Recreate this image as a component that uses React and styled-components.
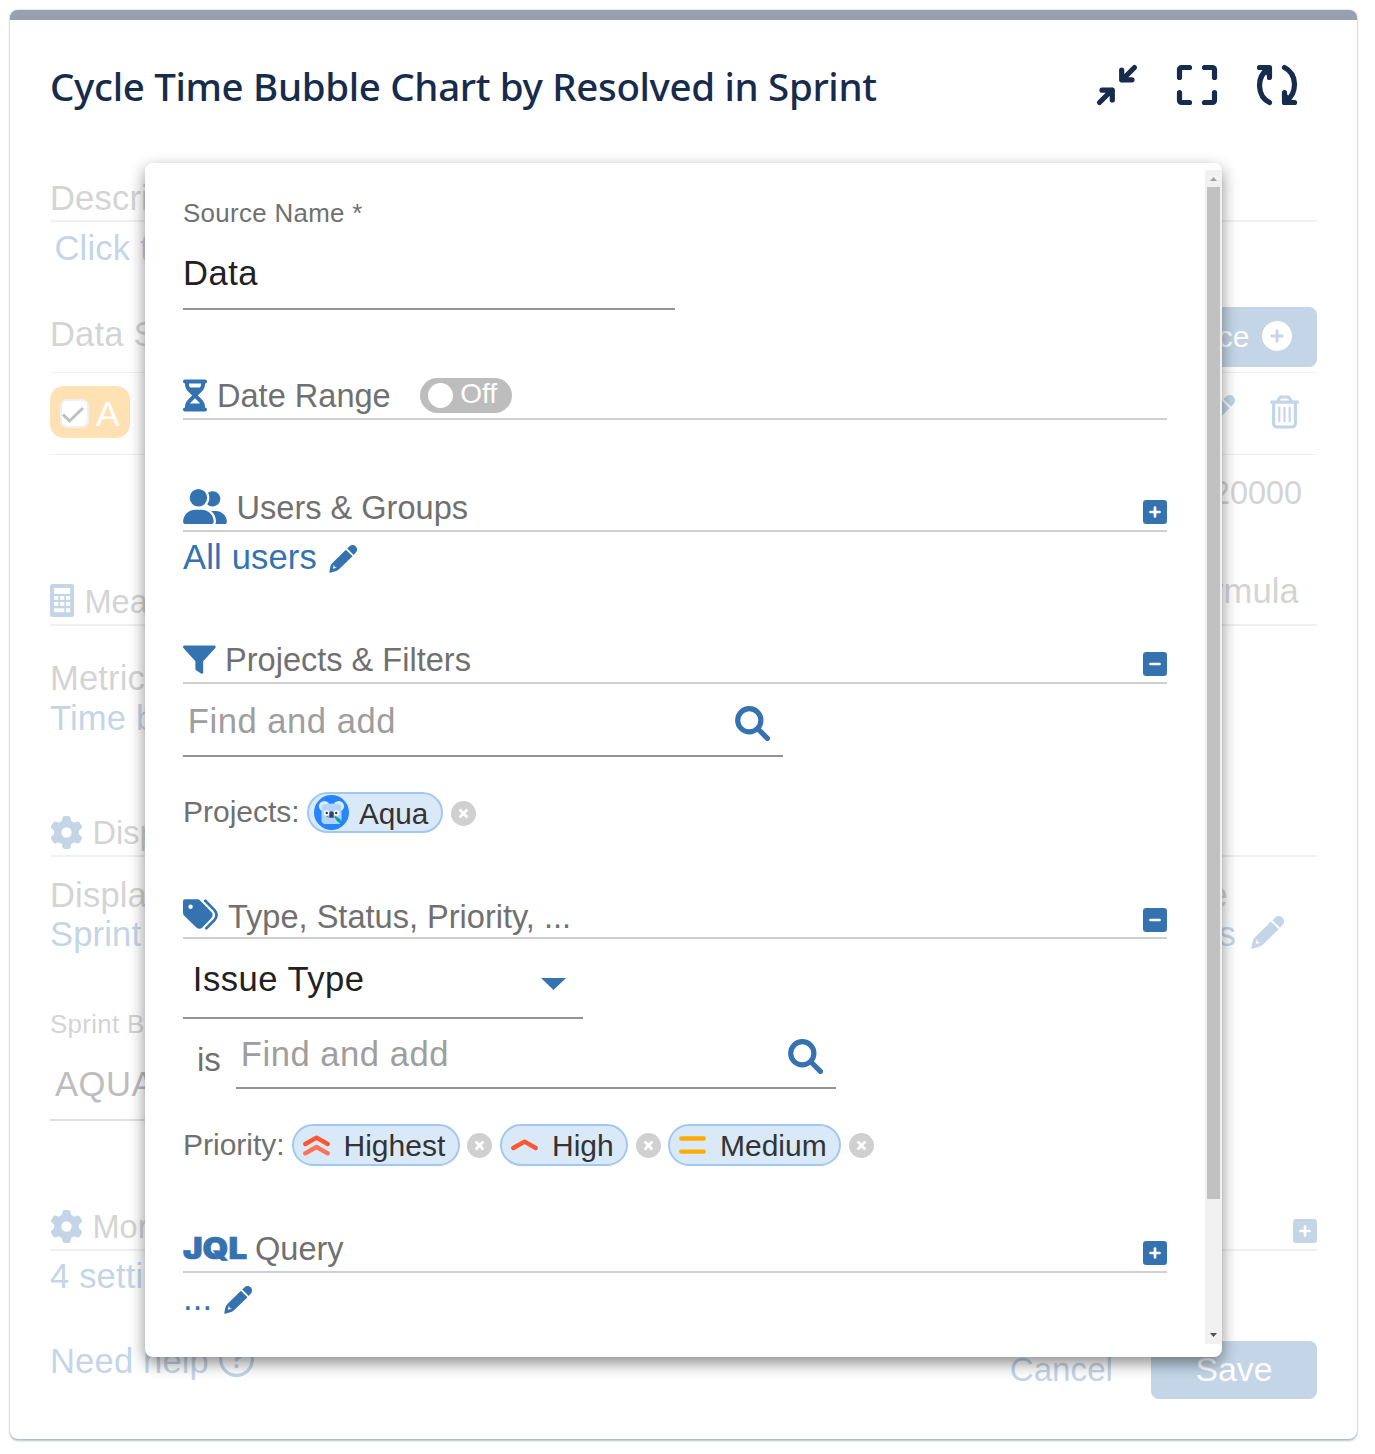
import React from 'react';
import styled, { createGlobalStyle } from 'styled-components';
import {
  FaRegTrashCan,
  FaGear,
  FaCirclePlus,
  FaRegCircleQuestion,
} from 'react-icons/fa6';

const BLUE = '#3572b0';
const GREY = '#707070';

const GlobalStyle = createGlobalStyle`
  * { box-sizing: border-box; }
  body {
    margin: 0;
    background: #fff;
    font-family: "Liberation Sans", Arial, sans-serif;
    color: ${GREY};
  }
`;

const Page = styled.main`
  position: relative;
  width: 1375px;
  height: 1454px;
  padding: 10px 18px 15px 10px;
  overflow: hidden;
`;

const Card = styled.section`
  height: 1429px;
  border-top: 10px solid #97a0af;
  border-radius: 8px;
  background: #fff;
  padding: 45px 40px 40px;
  box-shadow: 0 2px 2px rgba(9, 30, 66, 0.25), 0 0 2px rgba(9, 30, 66, 0.31);
`;

const TitleBar = styled.header`
  display: flex;
  justify-content: space-between;
  height: 40px;
  padding-right: 20px;
`;

const Title = styled.h1`
  margin: 1px 0 0;
  font: 500 38.5px/40px "Noto Sans", "Open Sans", sans-serif;
  letter-spacing: -0.34px;
  color: #172b4d;
  white-space: nowrap;
`;

const Tools = styled.div`
  display: flex;
  gap: 40px;
`;

const ToolIcon = styled.svg`
  width: 40px;
  height: 40px;
  overflow: visible;
  fill: none;
  stroke: #172b4d;
  stroke-width: 5.2;
  stroke-linecap: round;
  stroke-linejoin: round;
`;

const Form = styled.div`
  display: flex;
  flex-direction: column;
  opacity: 0.295;
  padding-top: 70px;
`;

const Icon = styled.span`
  flex: none;
  color: ${(p) => p.$color || BLUE};
  margin-top: ${(p) => p.$top || 0}px;
  margin-left: ${(p) => p.$left || 0}px;
  svg {
    display: block;
    width: ${(p) => p.$w}px;
    height: ${(p) => p.$h || p.$w}px;
  }
`;

const Text = styled.div`
  font-size: 34.6px;
  letter-spacing: 0.15px;
  line-height: ${(p) => p.$line || 40}px;
  margin-top: ${(p) => p.$top || 0}px;
  margin-right: ${(p) => p.$end || 0}px;
  padding-left: ${(p) => p.$indent || 0}px;
  color: ${(p) => (p.$link ? BLUE : GREY)};
  white-space: nowrap;
`;

const Split = styled.div`
  display: flex;
  justify-content: space-between;
  align-items: flex-start;
  height: ${(p) => p.$h}px;
  margin-top: ${(p) => p.$top || 0}px;
  padding-right: ${(p) => p.$end || 0}px;
  border-bottom: ${(p) => p.$rule || 0}px solid #cfcfcf;
`;

const Cluster = styled.div`
  display: flex;
  align-items: flex-start;
`;

const ConditionRow = styled.div`
  display: flex;
  align-items: flex-start;
  height: 70px;
`;

const SectionHead = styled.div`
  display: flex;
  align-items: flex-start;
  height: 44px;
  margin-top: ${(p) => p.$top}px;
  border-bottom: 2px solid #cfcfcf;
`;

const SectionTitle = styled.h2`
  margin: 0 auto 0 ${(p) => p.$gap}px;
  font-size: 32.55px;
  font-weight: 400;
  line-height: ${(p) => p.$line || 41}px;
  color: ${GREY};
  white-space: nowrap;
`;

const ToggleTitle = styled(SectionTitle)`
  margin-right: 0;
`;

const JqlMark = styled.span`
  width: 64px;
  font: 900 29.5px/38px Inter, "Liberation Sans", sans-serif;
  color: ${BLUE};
  -webkit-text-stroke: 0.7px ${BLUE};
  transform: scaleX(1.115);
  transform-origin: 0 50%;
`;

const Label = styled.label`
  display: block;
  margin-top: ${(p) => p.$top || 0}px;
  font-size: 25.9px;
  letter-spacing: 0.32px;
  line-height: 30px;
`;

const Field = styled.div`
  display: flex;
  justify-content: space-between;
  width: ${(p) => p.$w}px;
  height: ${(p) => p.$h}px;
  margin-top: ${(p) => p.$top || 0}px;
  padding-left: ${(p) => p.$indent || 0}px;
  padding-right: ${(p) => p.$end || 0}px;
  border-bottom: 2px solid #949494;
  font-size: 34.6px;
  letter-spacing: 0.52px;
  line-height: ${(p) => p.$line}px;
  color: ${(p) => (p.$empty ? '#9e9e9e' : '#212121')};
  white-space: nowrap;
`;

const SourceButton = styled.button`
  display: flex;
  align-items: flex-start;
  height: 60px;
  border: 0;
  border-radius: 8px;
  padding: 0 25px;
  background: ${BLUE};
  color: #fff;
  font: 30px/59px "Liberation Sans", Arial, sans-serif;
`;

const SourceBadge = styled.div`
  display: flex;
  align-items: flex-start;
  width: 80px;
  height: 52px;
  margin-top: 13px;
  padding-left: 10px;
  border-radius: 14px;
  background: #ff9b00;
  color: #fff;
  font-size: 35.4px;
  line-height: 56px;
`;

const Check = styled.svg`
  width: 29px;
  height: 29px;
  margin: 13px 7px 0 0;
  border: 2px solid #cccdd4;
  border-radius: 7px;
  background: #fff;
  fill: none;
  stroke: #2d2d2d;
  stroke-width: 3;
`;

const Limit = styled.div`
  padding-right: 15px;
  font-size: 32.4px;
  line-height: 76px;
  height: 76px;
  text-align: right;
`;

const Footer = styled.footer`
  display: flex;
  align-items: flex-start;
  height: 58px;
  margin-top: 40px;
`;

const CancelButton = styled.button`
  margin-left: auto;
  margin-right: 38px;
  padding: 0;
  border: 0;
  background: none;
  color: ${BLUE};
  font: 33.2px/57px "Liberation Sans", Arial, sans-serif;
`;

const SaveButton = styled.button`
  width: 166px;
  height: 58px;
  padding: 0 0 2px;
  border: 0;
  border-radius: 8px;
  background: ${BLUE};
  color: #fff;
  font: 33.8px/56px "Liberation Sans", Arial, sans-serif;
`;

const Dialog = styled.section`
  position: absolute;
  left: 145px;
  top: 163px;
  width: 1077px;
  height: 1194px;
  display: flex;
  justify-content: space-between;
  padding-left: 38px;
  border-radius: 8px;
  background: #fff;
  box-shadow: 0 6px 16px rgba(0, 0, 0, 0.46);
`;

const DialogBody = styled.div`
  width: 984px;
  padding-top: 35px;
`;

const Scrollbar = styled.div`
  display: flex;
  flex-direction: column;
  justify-content: space-between;
  align-items: center;
  width: 17px;
  height: 1174px;
  margin-top: 7px;
  padding: 7px 0;
  background: #f1f1f1;
`;

const Thumb = styled.div`
  width: 13px;
  height: 1012px;
  margin: 6px 0 auto;
  background: #c1c1c1;
`;

const Arrow = styled.svg`
  display: block;
  width: 7px;
  height: 4px;
  fill: ${(p) => p.$fill};
`;

const Caret = styled.svg`
  width: 25px;
  height: 12px;
  margin-top: 39px;
  fill: ${BLUE};
`;

const Toggle = styled.div`
  display: flex;
  align-items: flex-start;
  width: 92px;
  height: 35px;
  margin: 2px auto 0 29.5px;
  padding-left: 8px;
  border-radius: 18px;
  background: #bdbdbd;
  color: #fff;
  font-size: 28px;
  line-height: 31px;
`;

const Knob = styled.span`
  width: 25px;
  height: 25px;
  margin: 5px 7px 0 0;
  border-radius: 50%;
  background: #fff;
`;

const Operator = styled.span`
  width: 53px;
  padding-left: 14px;
  font-size: 33px;
  line-height: 81px;
`;

const ChipRow = styled.div`
  display: flex;
  align-items: flex-start;
  height: ${(p) => p.$h}px;
  margin-top: ${(p) => p.$top}px;
`;

const ChipLabel = styled.span`
  width: ${(p) => p.$w}px;
  font-size: 30px;
  line-height: ${(p) => p.$line}px;
  white-space: nowrap;
`;

const Chip = styled.span`
  display: flex;
  align-items: flex-start;
  width: ${(p) => p.$w}px;
  height: ${(p) => p.$h}px;
  padding-left: ${(p) => p.$pad}px;
  border: 2px solid #a0c8f2;
  border-radius: 21px;
  background: #dae9f8;
  color: #333;
  font-size: ${(p) => p.$size || 30}px;
  line-height: 39px;
`;

const ChipIcon = styled.svg`
  flex: none;
  width: ${(p) => p.$w}px;
  height: ${(p) => p.$h}px;
  margin: ${(p) => p.$top}px ${(p) => p.$gap}px 0 0;
  fill: none;
  stroke-width: 4.4;
  stroke-linecap: round;
  stroke-linejoin: round;
`;

const RemoveMark = styled.svg`
  width: 25px;
  height: 25px;
  margin: 9px ${(p) => 15 - p.$gap}px 0 ${(p) => p.$gap}px;
  fill: #d0d0d0;
  stroke: #fff;
  stroke-width: 2.8;
`;

function Remove({ gap = 8 }) {
  return (
    <RemoveMark viewBox="0 0 25 25" $gap={gap}>
      <circle cx="12.5" cy="12.5" r="12.5" stroke="none" />
      <path d="M8.6 8.6l7.8 7.8M16.4 8.6l-7.8 7.8" />
    </RemoveMark>
  );
}

function Pencil() {
  return (
    <svg viewBox="0 0 28 28" fill="currentColor" fillRule="evenodd">
      <path d="M18.2 3.500L20.600 1.300a4.200 4.200 0 0 1 6 0l.2.200a4.200 4.200 0 0 1 0 6L24.700 9.900z" />
      <path d="M16.900 4.700L23.500 11.300 10.300 24Q8 26 5.500 26.500L1.200 27.700Q.2 27.900.3 26.900L1.300 22Q2 19.300 3.900 17.500zM3.900 23.700L8 22.700 5.700 22 4.900 19.600z" />
    </svg>
  );
}

function Search() {
  return (
    <svg viewBox="0 0 35 35" fill="none" stroke="currentColor" strokeWidth="5.2" strokeLinecap="round">
      <circle cx="14.300" cy="14.300" r="11.600" />
      <path d="M23.500 23.500l8.900 8.900" />
    </svg>
  );
}

function Hourglass() {
  return (
    <svg viewBox="0 0 384 512" fill="currentColor">
      <path d="M32 0C14.300 0 0 14.300 0 32S14.300 64 32 64V75c0 42.400 16.900 83.100 46.900 113.100L146.700 256 78.900 323.900C48.900 353.900 32 394.600 32 437v11c-17.700 0-32 14.300-32 32s14.300 32 32 32H352c17.700 0 32-14.300 32-32s-14.300-32-32-32V437c0-42.400-16.900-83.100-46.900-113.100L237.300 256l67.900-67.900c30-30 46.900-70.700 46.900-113.100V64c17.700 0 32-14.300 32-32s-14.300-32-32-32H32zM96 75V64H288V75c0 19-5.600 37.400-16 53H112c-10.300-15.600-16-34-16-53zm16 309c3.500-5.300 7.600-10.300 12.100-14.900L192 301.300l67.900 67.900c4.600 4.600 8.600 9.600 12.100 14.900H112z" />
    </svg>
  );
}

function UserPair() {
  return (
    <svg viewBox="0 0 640 512" fill="currentColor">
      <path d="M96 128a128 128 0 1 1 256 0A128 128 0 1 1 96 128zM0 482.300C0 383.800 79.800 304 178.300 304h91.400C368.200 304 448 383.800 448 482.300c0 16.400-13.300 29.700-29.700 29.700H29.700C13.300 512 0 498.700 0 482.300zM609.300 512H471.400c5.400-9.400 8.600-20.300 8.600-32v-8c0-60.700-27.100-115.200-69.800-151.800c2.400-.1 4.700-.2 7.100-.2h61.400C567.800 320 640 392.200 640 481.300c0 17-13.800 30.700-30.700 30.700zM432 256c-31 0-59-12.600-79.300-32.900C372.400 196.500 384 163.600 384 128c0-26.800-6.600-52.100-18.300-74.300C384.300 40.100 407.200 32 432 32c61.900 0 112 50.100 112 112s-50.100 112-112 112z" />
    </svg>
  );
}

function Funnel() {
  return (
    <svg viewBox="0 0 33 29" fill="currentColor">
      <path d="M1.600.4h29.600a1.500 1.500 0 0 1 1.100 2.500L20.200 16.200v11.300a1.300 1.300 0 0 1-2.100 1l-5.100-3.300a1.500 1.500 0 0 1-.6-1.200v-7.800L.4 2.900A1.500 1.500 0 0 1 1.600.4z" />
    </svg>
  );
}

function Tags() {
  return (
    <svg viewBox="0 0 35 31" fill="currentColor" fillRule="evenodd">
      <path d="M2 .3h12.500a3.500 3.500 0 0 1 2.400 1L28.400 13a4.200 4.200 0 0 1 0 6L19.400 28.600a4.200 4.200 0 0 1-6 0L1 16.400a3.400 3.400 0 0 1-1-2.400V2.300a2 2 0 0 1 2-2zM7.600 5.600a2.200 2.200 0 1 0 0 4.400 2.200 2.200 0 0 0 0-4.400z" />
      <path d="M22.300 1.700l9.200 9.400q4.100 4.900 0 9.900l-8.200 8.300" fill="none" stroke="currentColor" strokeWidth="2.700" strokeLinecap="round" />
    </svg>
  );
}

function Calculator() {
  return (
    <svg viewBox="0 0 24 33" fill="currentColor" fillRule="evenodd">
      <path d="M2.500 0h19A2.500 2.500 0 0 1 24 2.500v28a2.500 2.500 0 0 1-2.500 2.500h-19A2.500 2.500 0 0 1 0 30.500v-28A2.500 2.500 0 0 1 2.500 0zM4 4v6h16.200V4zM4 12v3.700h4.300V12zm6 0v3.700h4.300V12zm6 0v3.700h4.200V12zM4 18v3.700h4.300V18zm6 0v3.700h4.300V18zm6 0v3.700h4.200V18zM4 24.200v4h10.300v-4zm12 0v4h4.200v-4z" />
    </svg>
  );
}

function Koala() {
  return (
    <ChipIcon viewBox="0 0 35 35" $w={35} $h={35} $top={1} $gap={10}>
      <g stroke="none">
        <circle cx="17.5" cy="17.5" r="17.5" fill="#2684ff" />
        <circle cx="10.3" cy="11.3" r="5.4" fill="#deebff" />
        <circle cx="24.700" cy="11.3" r="5.4" fill="#deebff" />
        <circle cx="11" cy="12" r="3" fill="#b3d4ff" />
        <circle cx="24" cy="12" r="3" fill="#b3d4ff" />
        <path d="M7.5 17c0-5.500 4-8.500 10-8.500s10 3 10 8.500v8.500c0 2-1.500 3.500-3.500 3.500H11c-2 0-3.500-1.500-3.500-3.500z" fill="#b3d4ff" />
        <circle cx="12.5" cy="18" r="2.800" fill="#fff" />
        <circle cx="22.500" cy="18" r="2.800" fill="#fff" />
        <circle cx="12.800" cy="18" r="1.300" fill="#344563" />
        <circle cx="22.200" cy="18" r="1.300" fill="#344563" />
        <path d="M15.300 18.200c0-1.200 1-1.900 2.200-1.900s2.200.7 2.200 1.900v4h-4.400z" fill="#344563" />
        <path d="M12 20.800c2.500 1.700 8.500 1.700 11 0-1 2.600-10 2.600-11 0z" fill="#344563" />
        <path d="M21.500 22.500c3 0 5 1.500 6.500 5.500-3.500-.5-5.500-2-6.500-5.500z" fill="#00a3a3" stroke="#00a3a3" strokeWidth="1" />
      </g>
    </ChipIcon>
  );
}

function ExpandToggle({ open, top = 11.5 }) {
  return (
    <Icon $w={24} $top={top}>
      <svg viewBox="0 0 24 24">
        <rect width="24" height="24" rx="3.200" fill="currentColor" />
        <path
          d={open ? 'M7.500 12h9' : 'M7.500 12h9M12 7.500v9'}
          stroke="#fff"
          strokeWidth="2.700"
          strokeLinecap="round"
        />
      </svg>
    </Icon>
  );
}

function Header() {
  return (
    <TitleBar>
      <Title>Cycle Time Bubble Chart by Resolved in Sprint</Title>
      <Tools>
        <ToolIcon viewBox="0 0 40 40">
          <path d="M37.500 2.500L25 15M24.700 5v9.800H35M2.500 37.500L15 25M15.300 35v-9.800H5" />
        </ToolIcon>
        <ToolIcon viewBox="0 0 40 40">
          <path d="M2.500 12.500v-8a2 2 0 0 1 2-2h8M27.500 2.500h8a2 2 0 0 1 2 2v8M37.500 27.500v8a2 2 0 0 1-2 2h-8M12.500 37.500h-8a2 2 0 0 1-2-2v-8" />
        </ToolIcon>
        <ToolIcon viewBox="0 0 40 40">
          <path d="M2.500 2.500h10v10M12.500 37.500C-.3 31-.5 12 10.500 4.500M37.500 37.500h-10v-10M27.500 2.500C40.300 9 40.500 28 29.500 35.500" />
          <path d="M8 4.500h4v4.500zM32 35.500h-4V31z" />
        </ToolIcon>
      </Tools>
    </TitleBar>
  );
}

function BackgroundForm() {
  return (
    <Form>
      <Split $h={47} $rule={2}>
        <Text $line={46}>Description</Text>
      </Split>
      <Text $line={52} $link $indent={4.5}>Click to</Text>

      <Split $top={33} $h={66} $rule={1}>
        <Text $line={54}>Data Source</Text>
        <SourceButton>
          Source
          <Icon $color="#fff" $w={30} $top={14} $left={12.5}><FaCirclePlus /></Icon>
        </SourceButton>
      </Split>
      <Split $h={82} $rule={1} $end={18}>
        <SourceBadge>
          <Check viewBox="0 0 25 25"><path d="M1 13.500l6.500 6.500L21 7" /></Check>
          A
        </SourceBadge>
        <Cluster>
          <Icon $w={33} $top={22}><Pencil /></Icon>
          <Icon $w={29} $h={34} $top={22} $left={35}><FaRegTrashCan /></Icon>
        </Cluster>
      </Split>
      <Limit>20000</Limit>

      <SectionHead $top={51}>
        <Icon $w={24} $h={33} $top={2}><Calculator /></Icon>
        <SectionTitle $gap={10.5}>Measure</SectionTitle>
        <Text $line={38} $top={-10} $end={18}>Formula</Text>
      </SectionHead>
      <Text $top={32}>Metric</Text>
      <Text $link>Time by</Text>

      <SectionHead $top={75}>
        <Icon $w={33} $top={3}><FaGear /></Icon>
        <SectionTitle $gap={9.5}>Display</SectionTitle>
      </SectionHead>
      <Split $top={18} $h={40} $end={89}>
        <Text>Display</Text>
        <Text>Value</Text>
      </Split>
      <Split $h={38} $end={33}>
        <Text $line={38} $link>Sprint</Text>
        <Cluster>
          <Text $line={38} $link>Issues</Text>
          <Icon $w={33} $top={1} $left={15}><Pencil /></Icon>
        </Cluster>
      </Split>

      <Label $top={56}>Sprint Board</Label>
      <Field $top={20} $w={400} $h={62} $line={50} $indent={5}>AQUA board</Field>

      <SectionHead $top={86}>
        <Icon $w={33} $top={3}><FaGear /></Icon>
        <SectionTitle $gap={9.5}>More</SectionTitle>
        <ExpandToggle />
      </SectionHead>
      <Text $line={50} $link>4 settings</Text>

      <Footer>
        <Text $link>Need help</Text>
        <Icon $w={35} $top={1} $left={9.5}><FaRegCircleQuestion /></Icon>
        <CancelButton>Cancel</CancelButton>
        <SaveButton>Save</SaveButton>
      </Footer>
    </Form>
  );
}

function PriorityChips() {
  return (
    <ChipRow $top={35} $h={42}>
      <ChipLabel $w={109} $line={41}>Priority:</ChipLabel>
      <Chip $w={168} $h={42} $pad={9}>
        <ChipIcon viewBox="0 0 27 21" $w={27} $h={21} $top={9} $gap={13.5}>
          <path d="M2.300 9l11.200-6.300L24.700 9" stroke="#ff5630" />
          <path d="M2.300 18.300l11.200-6.300 11.200 6.300" stroke="#ff7452" />
        </ChipIcon>
        Highest
      </Chip>
      <Remove gap={7} />
      <Chip $w={128} $h={42} $pad={9}>
        <ChipIcon viewBox="0 0 27 12" $w={27} $h={12} $top={13} $gap={14}>
          <path d="M2.300 9l11.200-6.300L24.700 9" stroke="#ff5630" />
        </ChipIcon>
        High
      </Chip>
      <Remove />
      <Chip $w={173} $h={42} $pad={9}>
        <ChipIcon viewBox="0 0 27 18" $w={27} $h={18} $top={10} $gap={14}>
          <path d="M2.300 2.500h22.400M2.300 15.600h22.400" stroke="#ffab00" />
        </ChipIcon>
        Medium
      </Chip>
      <Remove />
    </ChipRow>
  );
}

function SourceDialog() {
  return (
    <Dialog>
      <DialogBody>
        <Label>Source Name *</Label>
        <Field $top={20} $w={492} $h={62} $line={50}>Data</Field>

        <SectionHead $top={66}>
          <Icon $w={24} $h={33} $top={3}><Hourglass /></Icon>
          <ToggleTitle $gap={10}>Date Range</ToggleTitle>
          <Toggle><Knob />Off</Toggle>
        </SectionHead>

        <SectionHead $top={68}>
          <Icon $w={44} $h={35} $top={1}><UserPair /></Icon>
          <SectionTitle $gap={9.5}>Users &amp; Groups</SectionTitle>
          <ExpandToggle />
        </SectionHead>
        <Cluster>
          <Text $line={50} $link>All users</Text>
          <Icon $w={28} $top={13} $left={12}><Pencil /></Icon>
        </Cluster>

        <SectionHead $top={58}>
          <Icon $w={33} $h={29} $top={4.5}><Funnel /></Icon>
          <SectionTitle $gap={9}>Projects &amp; Filters</SectionTitle>
          <ExpandToggle open />
        </SectionHead>
        <Field $w={600} $h={73} $line={74} $indent={4.8} $end={12.6} $empty>
          Find and add
          <Icon $w={35} $top={21.5}><Search /></Icon>
        </Field>
        <ChipRow $top={35} $h={41}>
          <ChipLabel $w={124} $line={40}>Projects:</ChipLabel>
          <Chip $w={136} $h={41} $pad={5} $size={29.7}><Koala />Aqua</Chip>
          <Remove />
        </ChipRow>

        <SectionHead $top={62}>
          <Icon $w={35} $h={31} $top={4}><Tags /></Icon>
          <SectionTitle $gap={10} $line={45}>Type, Status, Priority, ...</SectionTitle>
          <ExpandToggle open top={12.5} />
        </SectionHead>
        <Field $w={400} $h={80} $line={80} $indent={9.8} $end={17.5}>
          Issue Type
          <Caret viewBox="0 0 25 12"><path d="M0 0h25L12.500 12z" /></Caret>
        </Field>
        <ConditionRow>
          <Operator>is</Operator>
          <Field $w={600} $h={70} $line={70} $indent={4.8} $end={12.6} $empty>
            Find and add
            <Icon $w={35} $top={19.5}><Search /></Icon>
          </Field>
        </ConditionRow>
        <PriorityChips />

        <SectionHead $top={63}>
          <JqlMark>JQL</JqlMark>
          <SectionTitle $gap={8}>Query</SectionTitle>
          <ExpandToggle />
        </SectionHead>
        <Cluster>
          <Text $line={50} $link>...</Text>
          <Icon $w={28} $top={13} $left={11.3}><Pencil /></Icon>
        </Cluster>
      </DialogBody>
      <Scrollbar>
        <Arrow viewBox="0 0 7 4" $fill="#a3a3a3"><path d="M0 4L3.500 0 7 4z" /></Arrow>
        <Thumb />
        <Arrow viewBox="0 0 7 4" $fill="#505050"><path d="M0 0h7L3.500 4z" /></Arrow>
      </Scrollbar>
    </Dialog>
  );
}

export default function App() {
  return (
    <>
      <GlobalStyle />
      <Page>
        <Card>
          <Header />
          <BackgroundForm />
        </Card>
        <SourceDialog />
      </Page>
    </>
  );
}
